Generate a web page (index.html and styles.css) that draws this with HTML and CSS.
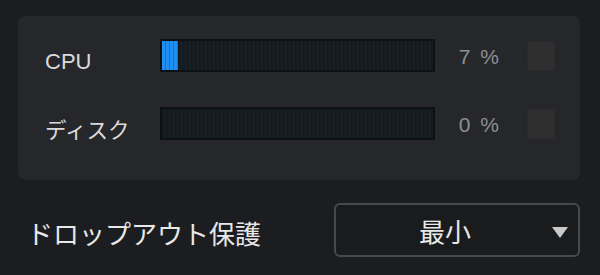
FILE: index.html
```html
<!DOCTYPE html>
<html lang="ja">
<head>
<meta charset="utf-8">
<link rel="stylesheet" href="styles.css">
</head>
<body>
<div class="screen">
  <section class="panel">
    <div class="row">
      <span class="label latin">CPU</span>
      <div class="meter"><div class="fill" style="width:16px"></div></div>
      <span class="pct">7 %</span>
      <span class="led"></span>
    </div>
    <div class="row">
      <span class="label">ディスク</span>
      <div class="meter"></div>
      <span class="pct">0 %</span>
      <span class="led"></span>
    </div>
  </section>
  <div class="option">
    <span class="opt-label">ドロップアウト保護</span>
    <div class="select">
      <span class="select-value">最小</span>
      <svg class="arrow" width="16" height="11" viewBox="0 0 16 11"><polygon points="0,0 16,0 8,11" fill="#c9c9c9"/></svg>
    </div>
  </div>
</div>
</body>
</html>
```
FILE: styles.css
```css
html, body {
  margin: 0;
  padding: 0;
  background: #1c1d20;
}
body {
  width: 600px;
  height: 275px;
  overflow: hidden;
  font-family: "Liberation Sans", "Noto Sans CJK JP", sans-serif;
  color: #d8d8d8;
}
.screen {
  padding: 16px 20px 0 18px;
  display: flex;
  flex-direction: column;
}
.panel {
  background: #26272b;
  border-radius: 8px;
  height: 164px;
  box-sizing: border-box;
  padding: 23px 25px 0 27px;
  display: flex;
  flex-direction: column;
  gap: 35px;
}
.row {
  display: flex;
  align-items: center;
  height: 33px;
}
.label {
  width: 115px;
  font-size: 21.5px;
  color: #dadada;
  font-family: "Noto Sans CJK JP", sans-serif;
  padding-top: 10px;
}
.label.latin {
  font-family: "Liberation Sans", "Noto Sans CJK JP", sans-serif;
  font-size: 22px;
  padding-top: 12px;
}
.meter {
  width: 275px;
  height: 33px;
  box-sizing: border-box;
  border: 2px solid #0e1113;
  background-color: #131b21;
  background-image: repeating-linear-gradient(90deg, #131b21 0 3px, #17222a 3px 4px);
  display: flex;
  padding: 0;
}
.fill {
  height: 100%;
  background-image: repeating-linear-gradient(90deg, #1f90f2 0 3px, #1470c8 3px 4px);
}
.pct {
  width: 64px;
  text-align: right;
  font-size: 21px;
  color: #8e8f92;
  word-spacing: 4px;
  padding-top: 2px;
}
.led {
  margin-left: 28px;
  width: 28px;
  height: 30px;
  background: #2f2f30;
  box-shadow: inset 0 0 0 1px #2a2a2c;
}
.option {
  display: flex;
  align-items: center;
  margin-top: 23px;
  padding-left: 9px;
}
.opt-label {
  flex: 1;
  font-family: "Noto Sans CJK JP", sans-serif;
  font-size: 26px;
  color: #e8e8e8;
  padding-top: 4px;
}
.select {
  width: 246px;
  height: 54px;
  box-sizing: border-box;
  border: 2px solid #48494c;
  border-radius: 6px;
  background: #1a1b1d;
  display: flex;
  align-items: center;
  justify-content: center;
  position: relative;
}
.select-value {
  font-family: "Noto Sans CJK JP", sans-serif;
  font-size: 26px;
  color: #e8e8e8;
  margin-left: -24px;
}
.arrow {
  position: absolute;
  right: 10px;
  top: 22px;
}
```
